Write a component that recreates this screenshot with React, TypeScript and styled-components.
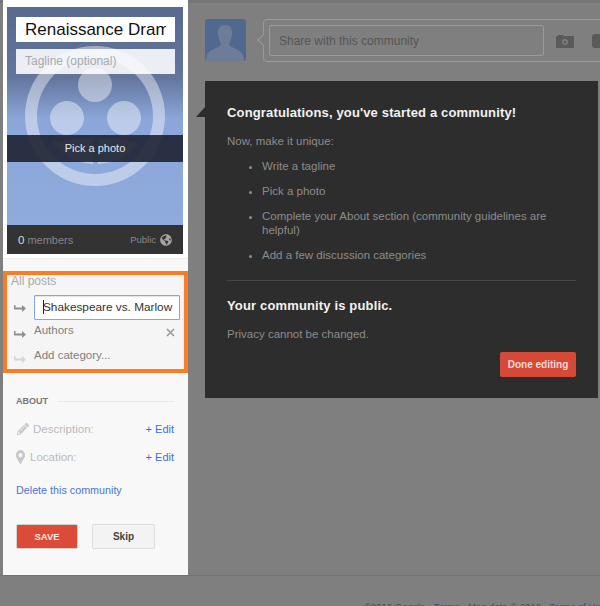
import React from "react";
import styled, { createGlobalStyle } from "styled-components";
import { FaGlobeAmericas, FaMapMarkerAlt, FaPencilAlt } from "react-icons/fa";

const Global = createGlobalStyle`
  html, body { margin: 0; padding: 0; }
  body {
    width: 600px;
    height: 606px;
    overflow: hidden;
    background: #7f7f7f;
    font-family: "Liberation Sans", Arial, sans-serif;
  }
`;

const Page = styled.div`
  position: relative;
  width: 600px;
  height: 606px;
  overflow: hidden;
  display: flex;
  flex-direction: column;
`;

const TopStrip = styled.div`
  height: 3px;
  background: #767676;
  flex: none;
`;

const Body = styled.div`
  display: flex;
  height: 572px;
  flex: none;
  padding-left: 3px;
  border-bottom: 1px solid #727272;
`;

const Sidebar = styled.aside`
  width: 185px;
  flex: none;
  margin-top: -3px;
  height: 575px;
  background: #f8f8f8;
  display: flex;
  flex-direction: column;
`;

const CardWrap = styled.div`
  background: #fff;
  padding: 7px 5px 4px 4px;
  border-bottom: 1px solid #ececec;
`;

const Card = styled.div`
  position: relative;
  width: 176px;
  height: 247px;
  display: flex;
  flex-direction: column;
  overflow: hidden;
  background: linear-gradient(#596a8f 0, #62759c 70px, #8ba6d9 112px, #90abdd 100%);
`;

const Watermark = styled.svg`
  position: absolute;
  left: 0;
  top: 0;
`;

const CardHead = styled.div`
  position: relative;
  padding: 10px 8px 0 9px;
  display: flex;
  flex-direction: column;
  gap: 7px;
`;

const TitleField = styled.div`
  height: 25px;
  background: #fff;
  border: solid #fff;
  border-width: 0 9px;
  font-size: 17px;
  line-height: 26px;
  color: #111;
  white-space: nowrap;
  overflow: hidden;
`;

const TaglineField = styled.div`
  height: 25px;
  background: rgba(255, 255, 255, 0.88);
  padding: 0 9px;
  font-size: 12px;
  line-height: 25px;
  color: #a9a9ad;
`;

const PhotoBand = styled.div`
  position: relative;
  margin-top: 61px;
  height: 27px;
  background: rgba(30, 36, 50, 0.9);
  color: #e6e8ec;
  font-size: 11px;
  line-height: 27px;
  text-align: center;
`;

const CardFoot = styled.div`
  position: relative;
  margin-top: auto;
  height: 29px;
  background: #333;
  display: flex;
  align-items: center;
  padding: 0 11px;
  font-size: 11px;
  color: #858585;
`;

const Count = styled.span`
  color: #ddd;
  font-size: 11.5px;
  margin-right: 3px;
`;

const PublicTag = styled.span`
  margin-left: auto;
  display: flex;
  align-items: center;
  gap: 4px;
  font-size: 9.5px;
  color: #8a8a8a;
  svg { color: #a5a5a5; font-size: 12px; }
`;

const Categories = styled.section`
  margin-top: 12px;
  height: 102px;
  box-sizing: border-box;
  border: 4px solid #fb7c24;
  background: #f5f5f5;
  padding: 0 0 0 4px;
`;

const AllPosts = styled.div`
  margin: -1px 0 3px;
  font-size: 12px;
  line-height: 14px;
  color: #a9a9a9;
`;

const CategoryRow = styled.div<{ $height: number }>`
  display: flex;
  align-items: center;
  height: ${(p) => p.$height}px;
  padding-right: 4px;
`;

const ArrowIcon = styled.svg<{ $faint?: boolean }>`
  width: 12px;
  height: 9px;
  margin: 0 8px 0 3px;
  flex: none;
  color: ${(p) => (p.$faint ? "#d5d5d5" : "#8f8f8f")};
`;

const CategoryInput = styled.div`
  flex: 1;
  height: 25px;
  box-sizing: border-box;
  border: 1px solid #7ea6e8;
  border-radius: 1px;
  background: #fff;
  padding-left: 8px;
  font-size: 11.8px;
  line-height: 23px;
  color: #333;
  white-space: nowrap;
  overflow: hidden;
  box-shadow: inset 0 1px 1px #e4e4e4;
`;

const Caret = styled.span`
  display: inline-block;
  width: 1px;
  height: 14px;
  background: #222;
  vertical-align: -3px;
  margin-right: -1px;
`;

const CategoryName = styled.span`
  flex: 1;
  font-size: 11.5px;
  color: #808080;
  margin-top: -7px;
`;

const CloseIcon = styled.svg`
  width: 9px;
  height: 9px;
  margin: -2px 5px 0 0;
  color: #9a9a9a;
`;

const About = styled.section`
  padding: 22px 14px 0 13px;
`;

const AboutHead = styled.div`
  display: flex;
  align-items: center;
  gap: 10px;
  font-size: 9px;
  font-weight: bold;
  line-height: 12px;
  color: #777;
  &::after {
    content: "";
    flex: 1;
    height: 1px;
    background: #e8e8e8;
  }
`;

const AboutRow = styled.div<{ $top: number }>`
  display: flex;
  align-items: center;
  margin-top: ${(p) => p.$top}px;
  height: 16px;
  font-size: 11.5px;
  color: #bbb;
`;

const PencilIcon = styled(FaPencilAlt)`
  width: 12px;
  height: 12px;
  flex: none;
  margin: 0 4px 0 1px;
  color: #c8c8c8;
`;

const PinIcon = styled(FaMapMarkerAlt)`
  width: 9px;
  height: 14px;
  flex: none;
  margin-right: 5px;
  color: #c8c8c8;
`;

const EditLink = styled.a`
  margin-left: auto;
  font-size: 11px;
  color: #3f6fd6;
`;

const DeleteLink = styled.a`
  display: block;
  margin-top: 18px;
  font-size: 10.75px;
  line-height: 14px;
  color: #4a76d4;
`;

const Buttons = styled.div`
  display: flex;
  gap: 14px;
  margin-top: 27px;
`;

const SaveButton = styled.button`
  width: 62px;
  height: 25px;
  padding: 0;
  border: 1px solid #d3d0ce;
  border-radius: 2px;
  background: #dc4a38;
  color: #fbe9e6;
  font: bold 9.5px "Liberation Sans", Arial, sans-serif;
`;

const SkipButton = styled.button`
  width: 63px;
  height: 25px;
  padding: 0;
  border: 1px solid #dcdcdc;
  border-radius: 2px;
  background: #f3f3f3;
  color: #444;
  font: bold 10px "Liberation Sans", Arial, sans-serif;
`;

const Main = styled.main`
  flex: 1;
  min-width: 0;
  padding: 16px 0 0 17px;
  display: flex;
  flex-direction: column;
`;

const ShareRow = styled.div`
  display: flex;
  gap: 17px;
  width: 420px;
`;

const Avatar = styled.svg`
  width: 41px;
  height: 42px;
  flex: none;
  border-radius: 3px;
`;

const ShareBox = styled.div`
  position: relative;
  flex: 1;
  height: 43px;
  box-sizing: border-box;
  border: 1px solid #9a9a9a;
  border-radius: 4px;
  padding: 5px 0 0 5px;
  display: flex;
  gap: 12px;
  &::before {
    content: "";
    position: absolute;
    left: -5px;
    top: 16px;
    width: 7px;
    height: 7px;
    background: #7f7f7f;
    border-left: 1px solid #9a9a9a;
    border-bottom: 1px solid #9a9a9a;
    transform: rotate(45deg);
  }
`;

const ShareInput = styled.div`
  width: 275px;
  height: 31px;
  box-sizing: border-box;
  border: 1px solid #9a9a9a;
  border-radius: 2px;
  padding-left: 9px;
  font-size: 12px;
  line-height: 30px;
  color: #565656;
`;

const ShareIcons = styled.div`
  display: flex;
  align-items: center;
  gap: 18px;
  height: 31px;
  color: #5a5a5a;
`;

const ShareIcon = styled.svg`
  width: 18px;
  height: 14px;
  flex: none;
  margin-top: 1px;
`;

const Dialog = styled.div`
  position: relative;
  margin-top: 19px;
  width: 393px;
  height: 317px;
  box-sizing: border-box;
  background: #2d2d2d;
  padding: 24px 22px 0 22px;
  font-size: 11.5px;
  color: #8c8c8c;
  &::before {
    content: "";
    position: absolute;
    left: -9px;
    top: 26px;
    border-bottom: 10px solid #2d2d2d;
    border-left: 9px solid transparent;
  }
`;

const DialogTitle = styled.h2`
  margin: 0;
  font-size: 13px;
  letter-spacing: 0.15px;
  line-height: 16px;
  font-weight: bold;
  color: #f2f2f2;
`;

const DialogText = styled.p`
  margin: 13px 0 0;
  line-height: 14px;
`;

const TaskList = styled.ul`
  margin: 11px 0 0;
  padding: 0 0 0 35px;
  li { margin-bottom: 11px; line-height: 14px; }
`;

const Divider = styled.hr`
  margin: 18px 0 17px;
  border: 0;
  height: 1px;
  background: #474747;
`;

const DoneRow = styled.div`
  display: flex;
  justify-content: flex-end;
  margin-top: 11px;
`;

const DoneButton = styled.button`
  width: 76px;
  height: 25px;
  padding: 0;
  border: 0;
  border-radius: 2px;
  background: #d64937;
  color: #f6dcd7;
  font: bold 10px "Liberation Sans", Arial, sans-serif;
`;

const Footer = styled.footer`
  position: absolute;
  left: 364px;
  top: 601px;
  font-size: 9.5px;
  line-height: 12px;
  color: #4c4c4c;
  white-space: nowrap;
  span { color: #3d4f78; }
`;

const Arrow = ({ faint }: { faint?: boolean }) => (
  <ArrowIcon $faint={faint} viewBox="0 0 12 9">
    <path d="M0 2h1.5v2.5H8V2l4 3.5L8 9V6.5H0z" fill="currentColor" />
  </ArrowIcon>
);

export default function App() {
  return (
    <Page>
      <Global />
      <TopStrip />
      <Body>
        <Sidebar>
          <CardWrap>
            <Card>
              <Watermark width="176" height="247" viewBox="0 0 176 247">
                <g fill="rgba(255,255,255,0.42)">
                  <path
                    fillRule="evenodd"
                    d="M88 39a70 70 0 1 0 0 140a70 70 0 1 0 0-140zM88 51a58 58 0 1 1 0 116a58 58 0 1 1 0-116z"
                  />
                  <circle cx="88" cy="78" r="17" />
                  <circle cx="60" cy="111" r="17" />
                  <circle cx="117" cy="111" r="17" />
                  <path d="M45 136c12-4 28-5 41-4v25c-16-1-31-8-41-21z" />
                  <path d="M91 132c13-1 28 0 41 4c-10 13-25 20-41 21z" />
                </g>
              </Watermark>
              <CardHead>
                <TitleField>Renaissance Drama</TitleField>
                <TaglineField>Tagline (optional)</TaglineField>
              </CardHead>
              <PhotoBand>Pick a photo</PhotoBand>
              <CardFoot>
                <Count>0</Count> members
                <PublicTag>
                  Public <FaGlobeAmericas />
                </PublicTag>
              </CardFoot>
            </Card>
          </CardWrap>

          <Categories>
            <AllPosts>All posts</AllPosts>
            <CategoryRow $height={33}>
              <Arrow />
              <CategoryInput>
                <Caret />
                Shakespeare vs. Marlow
              </CategoryInput>
            </CategoryRow>
            <CategoryRow $height={18}>
              <Arrow />
              <CategoryName>Authors</CategoryName>
              <CloseIcon viewBox="0 0 9 9">
                <path d="M1 1l7 7M8 1l-7 7" stroke="currentColor" strokeWidth="1.6" />
              </CloseIcon>
            </CategoryRow>
            <CategoryRow $height={32}>
              <Arrow faint />
              <CategoryName>Add category...</CategoryName>
            </CategoryRow>
          </Categories>

          <About>
            <AboutHead>ABOUT</AboutHead>
            <AboutRow $top={14}>
              <PencilIcon />
              Description:
              <EditLink>+ Edit</EditLink>
            </AboutRow>
            <AboutRow $top={12}>
              <PinIcon preserveAspectRatio="none" />
              Location:
              <EditLink>+ Edit</EditLink>
            </AboutRow>
            <DeleteLink>Delete this community</DeleteLink>
            <Buttons>
              <SaveButton>SAVE</SaveButton>
              <SkipButton>Skip</SkipButton>
            </Buttons>
          </About>
        </Sidebar>

        <Main>
          <ShareRow>
            <Avatar viewBox="0 0 41 42">
              <rect width="41" height="42" fill="#51698f" />
              <path
                d="M20 6c-6 0-8 5-7 10c1 4 2 7 3 9c0 3-9 5-12 8c-2 2-3 5-3 9h38c0-4-1-7-3-9c-3-3-12-5-12-8c1-2 2-5 3-9c1-5-1-10-7-10z"
                fill="#6d7d98"
              />
            </Avatar>
            <ShareBox>
              <ShareInput>Share with this community</ShareInput>
              <ShareIcons>
                <ShareIcon viewBox="0 0 18 14">
                  <path
                    fillRule="evenodd"
                    fill="currentColor"
                    d="M1 2h1V1h5v1h10a1 1 0 0 1 1 1v10a1 1 0 0 1-1 1H1a1 1 0 0 1-1-1V3a1 1 0 0 1 1-1zM9 5a3 3 0 1 0 0 6a3 3 0 1 0 0-6zM9 6.5a1.5 1.5 0 1 1 0 3a1.5 1.5 0 1 1 0-3z"
                  />
                </ShareIcon>
                <ShareIcon viewBox="0 0 18 14">
                  <rect width="18" height="14" rx="3" fill="currentColor" />
                </ShareIcon>
              </ShareIcons>
            </ShareBox>
          </ShareRow>

          <Dialog>
            <DialogTitle>Congratulations, you've started a community!</DialogTitle>
            <DialogText>Now, make it unique:</DialogText>
            <TaskList>
              <li>Write a tagline</li>
              <li>Pick a photo</li>
              <li>Complete your About section (community guidelines are helpful)</li>
              <li>Add a few discussion categories</li>
            </TaskList>
            <Divider />
            <DialogTitle>Your community is public.</DialogTitle>
            <DialogText>Privacy cannot be changed.</DialogText>
            <DoneRow>
              <DoneButton>Done editing</DoneButton>
            </DoneRow>
          </Dialog>
        </Main>
      </Body>
      <Footer>
        ©2012 Google · <span>Terms</span> · Map data © 2012 · <span>Terms of Use</span>
      </Footer>
    </Page>
  );
}
